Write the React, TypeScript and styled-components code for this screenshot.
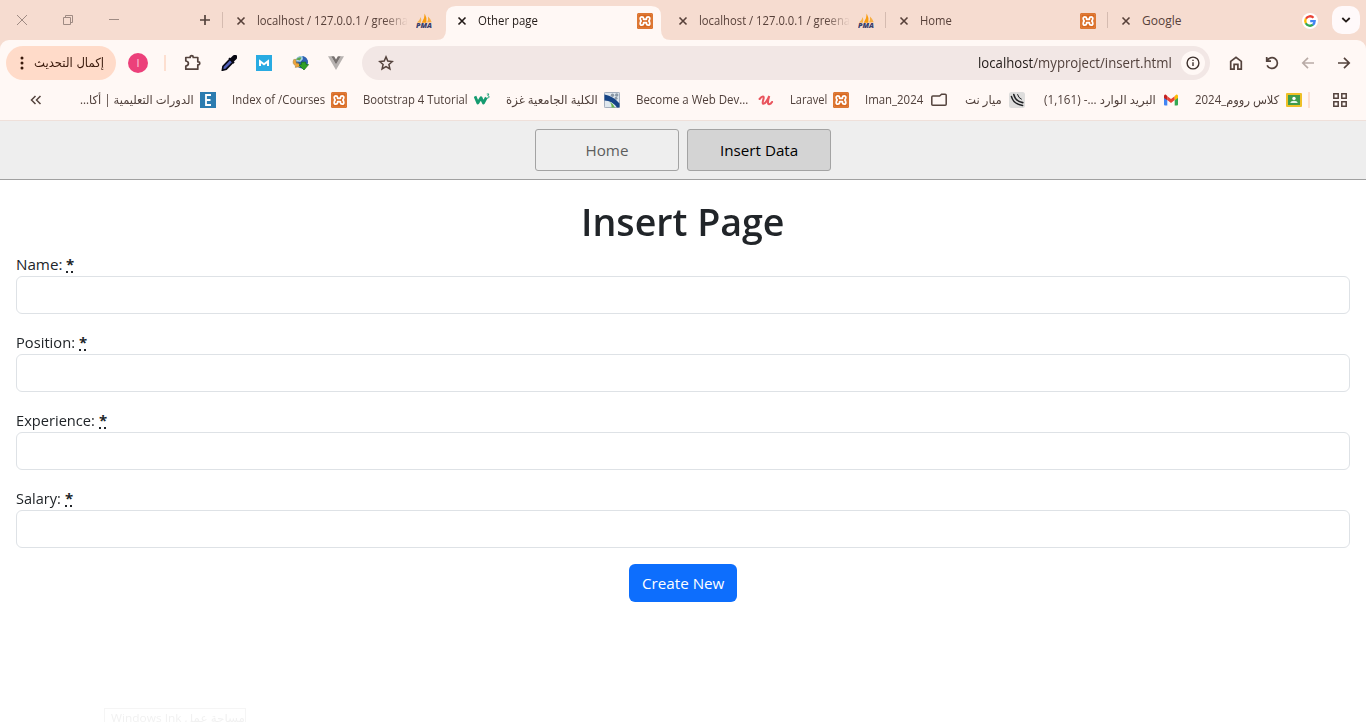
import React, { useLayoutEffect, useRef, useState } from "react";
import styled, { createGlobalStyle } from "styled-components";

const GlobalStyle = createGlobalStyle`
  * { box-sizing: border-box; }
  html, body { margin: 0; padding: 0; background: #fff; overflow: hidden; }
  body { font-family: "Open Sans", "Noto Sans", "DejaVu Sans", sans-serif; color: #212529; }
  svg { display: block; flex: none; }
`;

/* ---------- text fitted to a given width ---------- */

const FitBox = styled.span<{ $width: number }>`
  display: block;
  flex: none;
  width: ${(p) => p.$width}px;
  white-space: nowrap;
`;

const FitInner = styled.span`
  display: inline-block;
  transform-origin: 0 50%;
`;

function Fit({ width, dir, children }: { width: number; dir?: "rtl"; children: React.ReactNode }) {
  const ref = useRef<HTMLSpanElement>(null);
  const [scale, setScale] = useState(1);
  useLayoutEffect(() => {
    if (ref.current) setScale(width / ref.current.offsetWidth);
  }, [width]);
  return (
    <FitBox $width={width}>
      <FitInner ref={ref} dir={dir} style={{ transform: `scaleX(${scale})` }}>
        {children}
      </FitInner>
    </FitBox>
  );
}

/* ---------- tab strip ---------- */

const Browser = styled.header`
  background: #f6dcd0;
`;

const TabStrip = styled.div`
  display: flex;
  height: 40px;
  padding-right: 6px;
`;

const WindowControls = styled.div`
  display: flex;
  align-items: center;
  width: 225px;
  padding-left: 16px;
  color: #9f8b83;
`;

const ControlIcon = styled.span<{ $gap: number }>`
  display: flex;
  margin-right: ${(p) => p.$gap}px;
`;

const TabBox = styled.div<{ $active?: boolean; $width: number }>`
  position: relative;
  display: flex;
  align-items: center;
  width: ${(p) => p.$width}px;
  height: 40px;
  padding: 1px 0 0 11px;
  font-size: 12px;
  line-height: 20px;
  color: ${(p) => (p.$active ? "#221a17" : "#574039")};
`;

const ActiveShape = styled.svg`
  position: absolute;
  left: -10px;
  top: 6px;
`;

const TabDivider = styled.i`
  position: absolute;
  left: -3px;
  top: 12px;
  width: 1px;
  height: 16px;
  background: #d5bbb0;
`;

const TabTitle = styled.div<{ $fade?: boolean; $gap?: number }>`
  position: relative;
  width: 151px;
  margin: 0 ${(p) => p.$gap ?? 8}px 0 11px;
  ${(p) => p.$fade && "mask-image: linear-gradient(90deg, #000 126px, transparent 151px);"}
`;

const TabIcon = styled.span`
  position: relative;
  display: flex;
`;

const TabSearch = styled.button`
  display: flex;
  align-items: center;
  justify-content: center;
  width: 28px;
  height: 28px;
  margin: 6px 0 0 auto;
  padding: 0;
  border: 0;
  border-radius: 10px;
  background: #fff9fa;
`;

/* ---------- toolbar ---------- */

const Chrome = styled.div`
  height: 81px;
  padding-top: 6px;
  border-radius: 9px 9px 0 0;
  border-bottom: 1px solid #efe0da;
  background: #fff8f5;
`;

const Toolbar = styled.div`
  display: flex;
  align-items: center;
  height: 34px;
  padding: 0 13px 0 6px;
`;

const UpdateButton = styled.button`
  display: flex;
  align-items: center;
  gap: 10px;
  width: 110px;
  height: 34px;
  padding: 0 0 0 14px;
  border: 0;
  border-radius: 17px;
  background: #ffdbc9;
  color: #3a1a0c;
  font: 12.5px/20px "DejaVu Sans", sans-serif;
`;

const Avatar = styled.div`
  width: 20px;
  height: 20px;
  margin-left: 12px;
  border-radius: 50%;
  background: #ec407a;
  color: #fbc3d6;
  font-size: 11px;
  line-height: 19px;
  text-align: center;
`;

const Divider = styled.i<{ $left: number; $right: number }>`
  flex: none;
  width: 2px;
  height: 16px;
  margin: 0 ${(p) => p.$right}px 0 ${(p) => p.$left}px;
  background: #fddfd0;
`;

const Extensions = styled.div`
  display: flex;
  align-items: center;
  justify-content: space-between;
  width: 161px;
  margin-right: 18px;
`;

const Omnibox = styled.div`
  display: flex;
  align-items: center;
  width: 848px;
  height: 34px;
  padding: 0 5px 0 16px;
  border-radius: 17px;
  background: #f2e7e5;
`;

const Url = styled.div`
  margin-left: auto;
  color: #52413c;
  font-size: 14px;
  line-height: 20px;

  b {
    font-weight: 400;
    color: #211a18;
  }
`;

const InfoCircle = styled.div`
  display: flex;
  align-items: center;
  justify-content: center;
  width: 24px;
  height: 24px;
  margin-left: 9px;
  border-radius: 50%;
  background: #fff8f5;
`;

const NavIcons = styled.div`
  display: flex;
  gap: 18px;
  margin-left: 17px;
`;

/* ---------- bookmarks ---------- */

const Bookmarks = styled.div`
  display: flex;
  align-items: center;
  height: 40px;
  padding: 0 0 0 30px;
  color: #50403b;
  font-size: 12px;
  line-height: 20px;
`;

const BookmarkList = styled.div`
  display: flex;
  margin-left: 38px;
`;

const BookmarkItem = styled.div<{ $width: number; $gap?: number; $arabic?: boolean }>`
  display: flex;
  align-items: center;
  justify-content: space-between;
  width: ${(p) => p.$width}px;
  margin-right: ${(p) => p.$gap ?? 16}px;
  ${(p) => p.$arabic && 'font-family: "Open Sans", "DejaVu Sans", sans-serif;'}
`;

/* ---------- page ---------- */

const PageNav = styled.nav`
  display: flex;
  justify-content: center;
  gap: 8px;
  height: 59px;
  padding-top: 8px;
  border-bottom: 1px solid #a0a0a0;
  background: #eee;
`;

const NavButton = styled.button<{ $active?: boolean }>`
  display: flex;
  align-items: center;
  justify-content: center;
  width: 144px;
  height: 42px;
  padding: 0 0 1px;
  border: 1px solid #a3a3a3;
  border-radius: 3px;
  background: ${(p) => (p.$active ? "#d4d4d4" : "#eee")};
  color: ${(p) => (p.$active ? "#000" : "#5d5d5d")};
  font: 15.2px/24px "Open Sans", sans-serif;
`;

const Main = styled.main`
  display: flex;
  flex-direction: column;
  height: 542px;
  padding: 17px 16px 0;
`;

const Title = styled.h1`
  display: flex;
  justify-content: center;
  margin: 0 0 7px;
  font-size: 38.5px;
  font-weight: 600;
  line-height: 48px;
`;

const Field = styled.div`
  margin-bottom: 16px;
  font-size: 15.2px;
  line-height: 24px;
`;

const FieldLabel = styled.label`
  display: flex;
  height: 24px;
`;

const Star = styled.abbr`
  width: 7px;
  height: 21px;
  margin-left: 4px;
  border-bottom: 2px dotted #212529;
  text-decoration: none;
  font-size: 15px;
  font-weight: 700;
`;

const Input = styled.input`
  display: block;
  width: 100%;
  height: 38px;
  padding: 6px 12px;
  border: 1px solid #dee2e6;
  border-radius: 6px;
  background: #fff;
`;

const Submit = styled.button`
  display: flex;
  align-items: center;
  justify-content: center;
  align-self: center;
  width: 108px;
  height: 38px;
  padding: 0;
  border: 0;
  border-radius: 6px;
  background: #0d6efd;
  color: #fff;
  font: 15.2px/24px "Open Sans", sans-serif;
`;

const InkTooltip = styled.div`
  width: 142px;
  height: 14px;
  margin: auto 0 0 88px;
  padding-left: 6px;
  border: 1px solid #f5f5f5;
  border-bottom: 0;
  color: #f1f1f1;
  font-size: 11px;
  line-height: 18px;
`;

/* ---------- icons ---------- */

const ink = "#54433d";

const CloseSvg = styled.svg`
  position: relative;
`;

const CloseIcon = ({ color }: { color: string }) => (
  <CloseSvg width="10" height="10" viewBox="0 0 10 10">
    <path d="M1.5 1.5l7 7M8.5 1.5l-7 7" stroke={color} strokeWidth="1.6" />
  </CloseSvg>
);

const XamppIcon = () => (
  <svg width="16" height="16" viewBox="0 0 16 16">
    <rect width="16" height="16" rx="1.5" fill="#d86820" />
    <rect x="1" y="1" width="14" height="14" rx="1" fill="none" stroke="#eb9a62" strokeWidth=".6" />
    <path
      d="M6.6 6.3V5.3Q6.4 3.8 4.9 3.8Q3.2 3.8 3.2 5.6Q3.2 7.2 4.2 8Q3.2 8.8 3.2 10.4Q3.2 12.2 4.9 12.2Q6.4 12.2 6.6 10.7V9.7H9.4V10.7Q9.6 12.2 11.1 12.2Q12.8 12.2 12.8 10.4Q12.8 8.8 11.8 8Q12.8 7.2 12.8 5.6Q12.8 3.8 11.1 3.8Q9.6 3.8 9.4 5.3V6.3Z"
      fill="none"
      stroke="#fff"
      strokeWidth="1.8"
      strokeLinejoin="round"
    />
  </svg>
);

const PmaIcon = () => (
  <svg width="16" height="16" viewBox="0 0 16 16">
    <path d="M1 9.5Q4 7 4.8 4Q5.8 7 4.8 9.7Z" fill="#f7b34c" />
    <path d="M5.8 9.8Q8.8 5 8.7.5Q11.3 5 10.4 9.8Z" fill="#f89c0e" />
    <path d="M11 9.6Q12.5 6.5 12 3.5Q14.8 6 15.7 9.2Z" fill="#f6ae45" />
    <text x="0" y="15" textLength="16" lengthAdjust="spacingAndGlyphs" fontSize="6.3" fontWeight="800" fontStyle="italic" fill="#383e6c">
      PMA
    </text>
  </svg>
);

const GoogleIcon = () => (
  <svg width="16" height="16" viewBox="0 0 16 16">
    <circle cx="8" cy="8" r="8" fill="#fff" />
    <g fill="none" strokeWidth="2.3">
      <path d="M3.9 5.7A4.8 4.8 0 0 1 11.5 4.7" stroke="#ea4335" />
      <path d="M3.9 5.6A4.9 4.9 0 0 0 3.9 10.4" stroke="#fbbc05" />
      <path d="M3.8 10.3A4.8 4.8 0 0 0 11 11.7" stroke="#34a853" />
      <path d="M8.2 8.1H12.7Q12.7 10.3 10.9 11.8" stroke="#4285f4" />
    </g>
  </svg>
);

const PuzzleIcon = () => (
  <svg width="18" height="18" viewBox="0 0 18 18" fill="none" stroke={ink} strokeWidth="1.7" strokeLinejoin="round">
    <path d="M2.8 3.5H7.2V2.9Q7.2 1.7 8.7 1.7T10.2 2.9V3.5H14.8V7.8H15.4Q16.8 7.8 16.8 9.3T15.4 10.8H14.8V15.2H2.8V12Q5.4 11.6 5.4 9.5T2.8 7Z" />
  </svg>
);

const DropperIcon = () => (
  <svg width="16" height="16" viewBox="0 0 16 16">
    <path d="M9.2 4L12.2 7L5.2 14.2L1.4 15.2L2 11.4Z" fill="#5260b8" stroke="#080812" strokeWidth="1.7" />
    <path d="M8 3.2L13 8.2M10.2 3.7L12.6 1.2Q14.3 0 15.1 1.1T14.9 3.5L12.4 5.9Z" fill="#080812" stroke="#080812" strokeWidth="1.7" />
  </svg>
);

const MIcon = () => (
  <svg width="16" height="16" viewBox="0 0 16 16">
    <rect width="16" height="16" fill="#29abe2" />
    <path d="M4 11V6.2L8 9.3L12 6.2V11" fill="none" stroke="#fff" strokeWidth="2" />
  </svg>
);

const GlobeIcon = () => (
  <svg width="17" height="16" viewBox="0 0 17 16">
    <circle cx="9.6" cy="7.2" r="6.2" fill="#285ea8" />
    <path d="M3.6 5Q5.5 .4 10.5 1L11.5 3.5L8.5 6.8L4 6.5Z" fill="#a9d3ec" />
    <path d="M10.5 1.2Q16 2.4 15.9 7.8L14.5 10L12 8.5L11 5.2Z" fill="#2f62b3" />
    <path d="M4 4.5Q6.5 1.5 9.5 2.5L8 5.5Z" fill="#5aa64c" />
    <path d="M1.8 4.4Q-.3 8.8 3.6 10.8L3.2 12.4L9 11.4L5.6 7.4L5.2 8.8Q3.4 7.5 4 4.4Z" fill="#f0a43b" stroke="#8a7a38" strokeWidth=".5" />
    <path d="M7 10L9.5 9.6L9.2 7.4L13.6 7L14 9.4L16.6 9.6L12 15Z" fill="#2f9f26" stroke="#116e19" strokeWidth=".7" />
  </svg>
);

const VueIcon = () => (
  <svg width="16" height="16" viewBox="0 0 16 16">
    <path d="M0 1.2H3.2L8 9.4L12.8 1.2H16L8 15Z" fill="#b7b2b0" />
    <path d="M3.2 1.2H6.1L8 4.4L9.9 1.2H12.8L8 9.4Z" fill="#77716f" />
  </svg>
);

const StarIcon = () => (
  <svg width="16" height="16" viewBox="0 0 16 16">
    <path d="M8 1.9L9.8 6.1L14.3 6.5L10.9 9.5L11.9 13.9L8 11.6L4.1 13.9L5.1 9.5L1.7 6.5L6.2 6.1Z" fill="none" stroke={ink} strokeWidth="1.5" />
  </svg>
);

const InfoIcon = () => (
  <svg width="14" height="14" viewBox="0 0 14 14">
    <circle cx="7" cy="7" r="5.9" fill="none" stroke="#3d302c" strokeWidth="1.4" />
    <path d="M7 6.2V10M7 3.7V5.1" stroke="#3d302c" strokeWidth="1.4" />
  </svg>
);

const HomeIcon = () => (
  <svg width="18" height="18" viewBox="0 0 18 18" fill="none" stroke={ink} strokeWidth="1.7">
    <path d="M3.7 7.4L9 3.3L14.3 7.4V15.2H10.9V10.3H7.1V15.2H3.7Z" />
  </svg>
);

const ReloadIcon = () => (
  <svg width="18" height="18" viewBox="0 0 18 18" fill="none" stroke={ink} strokeWidth="1.7">
    <path d="M3.7 3V7.2H8M4 7A5.4 5.4 0 1 1 4.1 11.3" />
  </svg>
);

const ArrowIcon = ({ left }: { left?: boolean }) => (
  <svg width="18" height="18" viewBox="0 0 18 18" fill="none" stroke={left ? "#b9aba6" : ink} strokeWidth="1.7">
    <path d={left ? "M15 9H4M9 3.8L3.8 9L9 14.2" : "M3 9H14M9 3.8L14.2 9L9 14.2"} />
  </svg>
);

const EIcon = () => (
  <svg width="16" height="16" viewBox="0 0 16 16">
    <rect width="16" height="16" fill="#2c7cb0" />
    <path d="M11 3H6V13H11M6 8H10.5" fill="none" stroke="#fff" strokeWidth="1.8" />
  </svg>
);

const W3Icon = () => (
  <svg width="16" height="16" viewBox="0 0 16 16">
    <path d="M1 4.3L3.8 11L7 5.7L9.4 11L12.3 5.5" fill="none" stroke="#159b70" strokeWidth="2.8" strokeLinejoin="round" />
    <path d="M12.8 2H15L13.7 3.6Q15.4 3.8 15.1 5.1T13 6" fill="none" stroke="#159b70" strokeWidth=".9" />
  </svg>
);

const CollegeIcon = () => (
  <svg width="16" height="16" viewBox="0 0 16 16">
    <rect x=".4" y=".4" width="15.2" height="15.2" rx="1" fill="#dfe7ee" stroke="#8593a8" strokeWidth=".8" />
    <circle cx="8.5" cy="3.2" r="1.7" fill="#8b98a6" />
    <circle cx="12.7" cy="3" r="1.7" fill="#8b98a6" />
    <circle cx="12" cy="6.3" r="1.5" fill="#8b98a6" />
    <path d="M.5 2.5Q10 4.5 15.5 11.5V15.5H13Q8 8.5 .5 8.4Z" fill="#164486" />
    <path d="M5 9.6Q9 11.5 11 15.5H7.5Q8 12 5 9.6Z" fill="#65b54c" />
  </svg>
);

const UdemyIcon = () => (
  <svg width="16" height="16" viewBox="0 0 16 16">
    <path d="M1.6 7Q4 3.9 5.4 4.6C6.8 5.5 3.6 10.6 5 11.7C7 12.6 10 7.2 11.2 4C10 8.3 9.2 12.3 11.2 12.2Q12.8 12 14 10" fill="none" stroke="#e9545d" strokeWidth="2.1" strokeLinecap="round" />
  </svg>
);

const FolderIcon = () => (
  <svg width="16" height="16" viewBox="0 0 16 16">
    <path d="M1.8 13.2Q.8 13.2 .8 12.2V5Q.8 4 1.8 4H8.6L10.6 2.3H14.2Q15.2 2.3 15.2 3.3V12.2Q15.2 13.2 14.2 13.2Z" fill="none" stroke={ink} strokeWidth="1.5" />
  </svg>
);

const SwirlIcon = () => (
  <svg width="16" height="16" viewBox="0 0 16 16">
    <rect width="16" height="16" rx="2.5" fill="#dedddc" />
    <g fill="none" stroke="#1f2023" strokeLinecap="round">
      <path d="M2.4 4.4Q4.6 12.4 13.6 13.4" strokeWidth="1.5" />
      <path d="M4.8 2.6Q6.6 9.6 13.8 10.6" strokeWidth="1.6" />
      <path d="M8.6 2.6Q9.4 6 12.4 7.2" strokeWidth="1" />
    </g>
  </svg>
);

const GmailIcon = () => (
  <svg width="16" height="16" viewBox="0 0 16 16">
    <path d="M1 4.5L4.3 7V13.6H2Q1 13.6 1 12.6Z" fill="#4285f4" />
    <path d="M15 4.5L11.7 7V13.6H14Q15 13.6 15 12.6Z" fill="#34a853" />
    <path d="M4.3 4.2L8 7.1L11.7 4.2V8.1L8 11L4.3 8.1Z" fill="#ea4335" />
    <path d="M1 6V4Q1 2.2 2.6 2.5L4.3 3.9V8.3Z" fill="#c5221f" />
    <path d="M15 6V4Q15 2.2 13.4 2.5L11.7 3.9V8.3Z" fill="#fbbc04" />
  </svg>
);

const ClassroomIcon = () => (
  <svg width="16" height="16" viewBox="0 0 16 16">
    <rect y="1" width="16" height="14" rx="1" fill="#eec026" />
    <rect x="2" y="3" width="12" height="10" fill="#3f9b4a" />
    <circle cx="8" cy="6.4" r="1.7" fill="#fff" />
    <path d="M4.3 11Q4.8 8.8 8 8.8T11.7 11Z" fill="#e2f5e8" />
  </svg>
);

const AppsIcon = () => (
  <svg width="14" height="14" viewBox="0 0 14 14" fill="none" stroke={ink} strokeWidth="1.5">
    <path d="M.8.8H5.2V5.2H.8ZM8.8.8H13.2V5.2H8.8ZM.8 8.8H5.2V13.2H.8ZM8.8 8.8H13.2V13.2H8.8Z" />
  </svg>
);

/* ---------- data ---------- */

const tabs = [
  { title: "localhost / 127.0.0.1 / greena", text: 151, width: 221, icon: <PmaIcon />, fade: true, divider: true },
  { title: "Other page", text: 60, width: 221, icon: <XamppIcon />, active: true },
  { title: "localhost / 127.0.0.1 / greena", text: 151, width: 221, icon: <PmaIcon />, fade: true },
  { title: "Home", text: 32, width: 222, gap: 9, icon: <XamppIcon />, divider: true },
  { title: "Google", text: 39, width: 221, gap: 9, icon: <GoogleIcon />, divider: true },
];

const bookmarks = [
  { title: "الدورات التعليمية | أكا...", text: 114, width: 136, icon: <EIcon />, arabic: true },
  { title: "Index of /Courses", text: 93, width: 115, icon: <XamppIcon /> },
  { title: "Bootstrap 4 Tutorial", text: 105, width: 127, icon: <W3Icon /> },
  { title: "الكلية الجامعية غزة", text: 92, width: 114, icon: <CollegeIcon />, arabic: true },
  { title: "Become a Web Dev...", text: 112, width: 138, icon: <UdemyIcon /> },
  { title: "Laravel", text: 37, width: 59, icon: <XamppIcon /> },
  { title: "Iman_2024", text: 58, width: 82, gap: 18, icon: <FolderIcon /> },
  { title: "ميار نت", text: 37, width: 60, gap: 19, icon: <SwirlIcon />, arabic: true },
  { title: "البريد الوارد ...- (1,161)", text: 112, width: 135, icon: <GmailIcon />, arabic: true },
  { title: "كلاس رووم_2024", text: 84, width: 107, icon: <ClassroomIcon />, arabic: true },
];

const fields = [
  { label: "Name:", width: 46 },
  { label: "Position:", width: 59 },
  { label: "Experience:", width: 79 },
  { label: "Salary:", width: 45 },
];

export default function App() {
  return (
    <>
      <GlobalStyle />
      <Browser>
        <TabStrip>
          <WindowControls>
            <ControlIcon $gap={34}>
              <svg width="12" height="12" viewBox="0 0 12 12" fill="none" stroke="currentColor">
                <path d="M1 1L11 11M11 1L1 11" />
              </svg>
            </ControlIcon>
            <ControlIcon $gap={34}>
              <svg width="12" height="12" viewBox="0 0 12 12" fill="none" stroke="currentColor">
                <path d="M1.5 3.5H8.5V10.5H1.5ZM3.5 3.5V1.5H10.5V8.5H8.5" />
              </svg>
            </ControlIcon>
            <ControlIcon $gap={79}>
              <svg width="12" height="12" viewBox="0 0 12 12" stroke="currentColor">
                <path d="M1 5.5H11" />
              </svg>
            </ControlIcon>
            <svg width="12" height="12" viewBox="0 0 12 12" stroke="#54433d" strokeWidth="1.7">
              <path d="M6 1V11M1 6H11" />
            </svg>
          </WindowControls>
          {tabs.map((t, i) => (
            <TabBox key={i} $active={t.active} $width={t.width}>
              {t.active && (
                <ActiveShape width="235" height="34" viewBox="0 0 235 34">
                  <path d="M0 34Q10 34 10 24V10Q10 0 20 0H215Q225 0 225 10V24Q225 34 235 34Z" fill="#fff8f5" />
                </ActiveShape>
              )}
              {t.divider && <TabDivider />}
              <CloseIcon color={t.active ? "#221a17" : "#574039"} />
              <TabTitle $fade={t.fade} $gap={t.gap}>
                <Fit width={t.text}>{t.title}</Fit>
              </TabTitle>
              <TabIcon>{t.icon}</TabIcon>
            </TabBox>
          ))}
          <TabSearch>
            <svg width="10" height="10" viewBox="0 0 10 10">
              <path d="M1.3 3L5 6.6L8.7 3" fill="none" stroke="#221a17" strokeWidth="1.8" />
            </svg>
          </TabSearch>
        </TabStrip>
        <Chrome>
          <Toolbar>
            <UpdateButton>
              <svg width="4" height="14" viewBox="0 0 4 14" fill="#3a1a0c">
                <circle cx="2" cy="2" r="1.5" />
                <circle cx="2" cy="7" r="1.5" />
                <circle cx="2" cy="12" r="1.5" />
              </svg>
              <Fit width={70} dir="rtl">إكمال التحديث</Fit>
            </UpdateButton>
            <Avatar>ا</Avatar>
            <Divider $left={16} $right={17} />
            <Extensions>
              <PuzzleIcon />
              <DropperIcon />
              <MIcon />
              <GlobeIcon />
              <VueIcon />
            </Extensions>
            <Omnibox>
              <StarIcon />
              <Url>
                <Fit width={194}>
                  <b>localhost</b>/myproject/insert.html
                </Fit>
              </Url>
              <InfoCircle>
                <InfoIcon />
              </InfoCircle>
            </Omnibox>
            <NavIcons>
              <HomeIcon />
              <ReloadIcon />
              <ArrowIcon left />
              <ArrowIcon />
            </NavIcons>
          </Toolbar>
          <Bookmarks>
            <svg width="12" height="12" viewBox="0 0 12 12" fill="none" stroke={ink} strokeWidth="1.5">
              <path d="M5.5 2L1.5 6L5.5 10M10.5 2L6.5 6L10.5 10" />
            </svg>
            <BookmarkList>
              {bookmarks.map((b) => (
                <BookmarkItem key={b.title} $width={b.width} $gap={b.gap} $arabic={b.arabic}>
                  <Fit width={b.text} dir={b.arabic ? "rtl" : undefined}>{b.title}</Fit>
                  {b.icon}
                </BookmarkItem>
              ))}
            </BookmarkList>
            <Divider $left={-10} $right={23} />
            <AppsIcon />
          </Bookmarks>
        </Chrome>
      </Browser>
      <PageNav>
        <NavButton>
          <Fit width={43}>Home</Fit>
        </NavButton>
        <NavButton $active>
          <Fit width={78}>Insert Data</Fit>
        </NavButton>
      </PageNav>
      <Main>
        <Title>
          <Fit width={204}>Insert Page</Fit>
        </Title>
        {fields.map((f) => (
          <Field key={f.label}>
            <FieldLabel>
              <Fit width={f.width}>{f.label}</Fit>
              <Star title="required">*</Star>
            </FieldLabel>
            <Input />
          </Field>
        ))}
        <Submit>
          <Fit width={82}>Create New</Fit>
        </Submit>
        <InkTooltip>
          <Fit width={134} dir="rtl">مساحة عمل Windows Ink</Fit>
        </InkTooltip>
      </Main>
    </>
  );
}
